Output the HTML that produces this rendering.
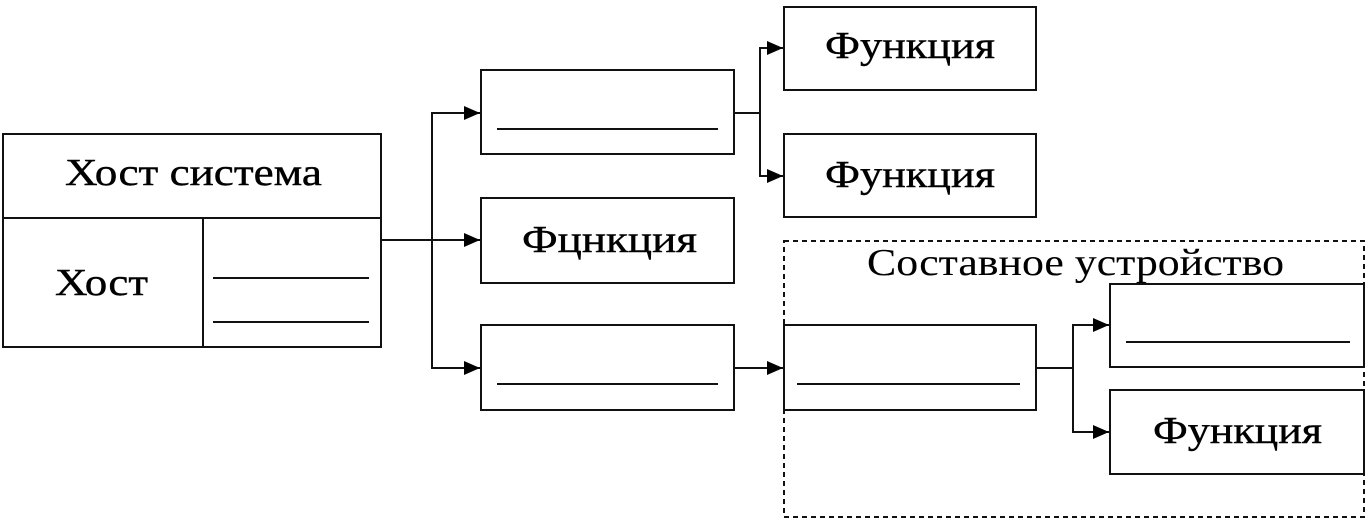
<!DOCTYPE html>
<html><head><meta charset="utf-8"><style>html,body{margin:0;padding:0;background:#fff}svg{display:block}text{font-family:"Liberation Serif",serif;font-size:38px;fill:#000;stroke:#000;stroke-width:0.4}</style></head><body>
<svg width="1370" height="519" viewBox="0 0 1370 519" xmlns="http://www.w3.org/2000/svg">
<defs><marker id="a" markerWidth="16" markerHeight="14" refX="16" refY="7" orient="auto" markerUnits="userSpaceOnUse"><path d="M0,0 L16,7 L0,14 z" fill="#000"/></marker></defs>
<g fill="none" stroke="#111" stroke-width="2">
<rect x="3" y="134" width="378" height="213"/>
<line x1="3" y1="218" x2="381" y2="218"/>
<line x1="203" y1="218" x2="203" y2="347"/>
<line x1="213" y1="278" x2="369" y2="278"/>
<line x1="213" y1="322" x2="369" y2="322"/>
<line x1="381" y1="240" x2="480" y2="240" marker-end="url(#a)"/>
<polyline points="480,113 432,113 432,368 480,368" marker-end="url(#a)"/>
<line x1="432" y1="113" x2="480" y2="113" marker-end="url(#a)"/>
<rect x="481" y="70" width="253" height="84"/>
<line x1="497" y1="129" x2="718" y2="129"/>
<rect x="481" y="198" width="253" height="85"/>
<rect x="481" y="325" width="253" height="85"/>
<line x1="497" y1="384" x2="718" y2="384"/>
<polyline points="734,113 760,113 760,48 783,48" marker-end="url(#a)"/>
<polyline points="760,113 760,176 783,176" marker-end="url(#a)"/>
<rect x="784" y="7" width="252" height="83"/>
<rect x="784" y="134" width="252" height="83"/>
<line x1="734" y1="368" x2="783" y2="368" marker-end="url(#a)"/>
<rect x="784" y="241" width="580" height="276" stroke-dasharray="5,4"/>
<rect x="784" y="325" width="252" height="85"/>
<line x1="797" y1="384" x2="1020" y2="384"/>
<polyline points="1036,368 1073,368 1073,325 1109,325" marker-end="url(#a)"/>
<polyline points="1073,368 1073,432 1109,432" marker-end="url(#a)"/>
<rect x="1110" y="284" width="254" height="83"/>
<line x1="1126" y1="342" x2="1350" y2="342"/>
<rect x="1110" y="390" width="254" height="84"/>
</g>
<text x="65" y="185" textLength="257" lengthAdjust="spacingAndGlyphs">Хост система</text>
<text x="55" y="295" textLength="93" lengthAdjust="spacingAndGlyphs">Хост</text>
<text x="522" y="252" textLength="175" lengthAdjust="spacingAndGlyphs">Фцнкция</text>
<text x="825" y="58" textLength="170" lengthAdjust="spacingAndGlyphs">Функция</text>
<text x="825" y="187" textLength="170" lengthAdjust="spacingAndGlyphs">Функция</text>
<text x="867" y="275" textLength="417" lengthAdjust="spacingAndGlyphs" style="stroke-width:0.1">Составное устройство</text>
<text x="1153" y="443" textLength="169" lengthAdjust="spacingAndGlyphs">Функция</text>
</svg>
</body></html>
